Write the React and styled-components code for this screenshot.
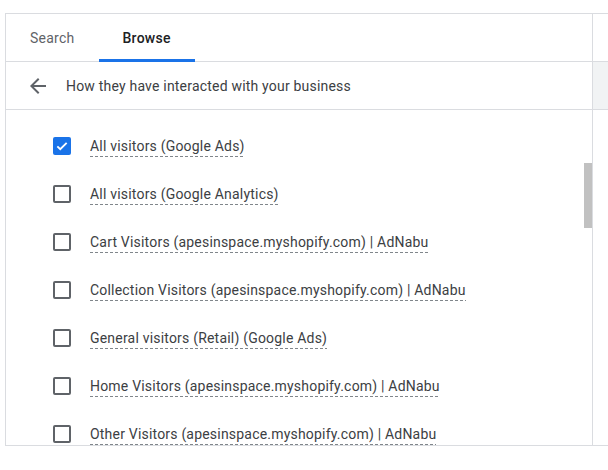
import React from "react";
import styled, { createGlobalStyle } from "styled-components";

const Global = createGlobalStyle`
  html, body { margin: 0; padding: 0; background: #fff; }
  body { font-family: Roboto, "Noto Sans", Arial, sans-serif; -webkit-font-smoothing: antialiased; }
`;

const Page = styled.div`
  padding: 13px 0 0 5px;
  height: 470px;
  box-sizing: border-box;
  overflow: hidden;
`;

const Frame = styled.div`
  display: flex;
  height: 433px;
  border-top: 1px solid #dadce0;
  border-bottom: 1px solid #dadce0;
  border-left: 1px solid #dadce0;
  box-sizing: border-box;
`;

const Panel = styled.div`
  width: 586px;
  flex-shrink: 0;
  border-right: 1px solid #dadce0;
  display: flex;
  flex-direction: column;
  position: relative;
  overflow: hidden;
`;

const Side = styled.div`
  flex: 1;
  display: flex;
  flex-direction: column;
`;

const SideBand = styled.div`
  flex-shrink: 0;
  margin-top: 47px;
  height: 49px;
  box-sizing: border-box;
  border-top: 1px solid #dadce0;
  border-bottom: 1px solid #dadce0;
  background: #f1f3f4;
`;

const Tabs = styled.div`
  flex-shrink: 0;
  display: flex;
  height: 48px;
  border-bottom: 1px solid #dadce0;
  box-sizing: border-box;
`;

const Tab = styled.div`
  position: relative;
  padding: 0 24px;
  display: flex;
  align-items: center;
  font-size: 14px;
  letter-spacing: 0.25px;
  color: ${(p) => (p.$active ? "#202124" : "#5f6368")};
  font-weight: ${(p) => (p.$active ? 500 : 400)};
  &::after {
    content: "";
    display: ${(p) => (p.$active ? "block" : "none")};
    position: absolute;
    left: 0;
    right: 0;
    bottom: -1px;
    height: 3px;
    background: #1a73e8;
  }
`;

const Header = styled.div`
  flex-shrink: 0;
  display: flex;
  align-items: center;
  height: 48px;
  padding-left: 20px;
  gap: 16px;
  border-bottom: 1px solid #dadce0;
  box-sizing: border-box;
  font-size: 14px;
  color: #3c4043;
  letter-spacing: 0.2px;
`;

const BackIcon = styled.svg`
  width: 24px;
  height: 24px;
  fill: #5f6368;
  flex-shrink: 0;
`;

const List = styled.div`
  flex-shrink: 0;
  padding-top: 12px;
  display: flex;
  flex-direction: column;
`;

const Row = styled.label`
  flex-shrink: 0;
  display: flex;
  align-items: center;
  height: 48px;
  padding-left: 47px;
  gap: 19px;
`;

const Box = styled.span`
  width: 18px;
  height: 18px;
  box-sizing: border-box;
  border-radius: 2px;
  flex-shrink: 0;
  display: flex;
  align-items: center;
  justify-content: center;
  border: ${(p) => (p.$checked ? "none" : "2px solid #5f6368")};
  background: ${(p) => (p.$checked ? "#1a73e8" : "transparent")};
`;

const Label = styled.span`
  font-size: 14px;
  color: #3c4043;
  letter-spacing: 0.2px;
  white-space: nowrap;
  padding-bottom: 2px;
  background-image: repeating-linear-gradient(
    to right,
    #80868b 0,
    #80868b 3px,
    transparent 3px,
    transparent 5px
  );
  background-size: 100% 1px;
  background-repeat: no-repeat;
  background-position: 0 100%;
  line-height: 18px;
  transform: translateY(1px);
`;

const Thumb = styled.div`
  position: absolute;
  right: 0;
  top: 149px;
  width: 8px;
  height: 65px;
  background: #c1c1c1;
`;

const items = [
  ["All visitors (Google Ads)", true],
  ["All visitors (Google Analytics)", false],
  ["Cart Visitors (apesinspace.myshopify.com) | AdNabu", false],
  ["Collection Visitors (apesinspace.myshopify.com) | AdNabu", false],
  ["General visitors (Retail) (Google Ads)", false],
  ["Home Visitors (apesinspace.myshopify.com) | AdNabu", false],
  ["Other Visitors (apesinspace.myshopify.com) | AdNabu", false],
];

export default function App() {
  return (
    <>
      <Global />
      <Page>
        <Frame>
          <Panel>
            <Tabs>
              <Tab>Search</Tab>
              <Tab $active>Browse</Tab>
            </Tabs>
            <Header>
              <BackIcon viewBox="0 0 24 24">
                <path d="M20 11H7.83l5.59-5.59L12 4l-8 8 8 8 1.41-1.41L7.83 13H20v-2z" />
              </BackIcon>
              How they have interacted with your business
            </Header>
            <List>
              {items.map(([t, c]) => (
                <Row key={t}>
                  <Box $checked={c}>
                    {c && (
                      <svg width="14" height="14" viewBox="0 0 24 24">
                        <path
                          d="M4 12.5l5 5L20 6.5"
                          fill="none"
                          stroke="#fff"
                          strokeWidth="3.2"
                        />
                      </svg>
                    )}
                  </Box>
                  <Label>{t}</Label>
                </Row>
              ))}
            </List>
            <Thumb />
          </Panel>
          <Side>
            <SideBand />
          </Side>
        </Frame>
      </Page>
    </>
  );
}
